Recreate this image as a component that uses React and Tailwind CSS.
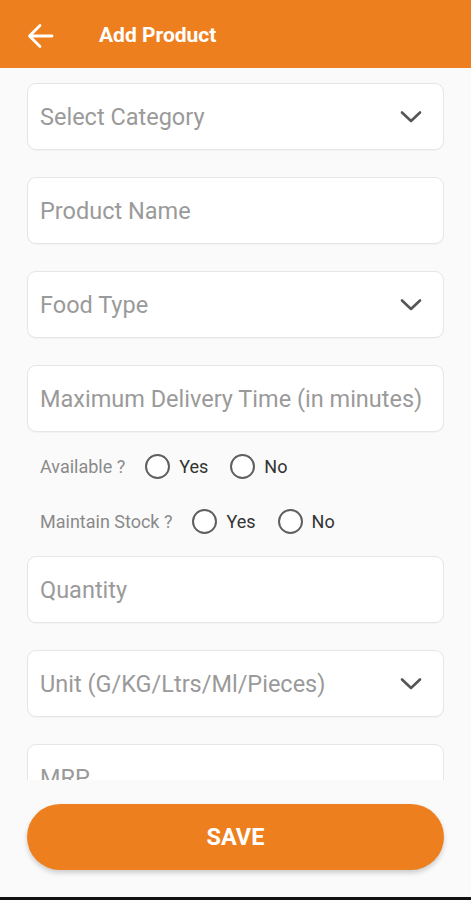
import React from "react";

const font = { fontFamily: "Roboto, 'Noto Sans', sans-serif" };

function Chevron() {
  return (
    <svg width="22" height="14" viewBox="0 0 22 14" className="shrink-0">
      <path d="M2 2.5 L11 11 L20 2.5" fill="none" stroke="#555" strokeWidth="2.6" strokeLinecap="round" strokeLinejoin="round" />
    </svg>
  );
}

function Field({ label, select }) {
  return (
    <div className="h-[67px] shrink-0 rounded-[9px] border border-[#e6e6e6] bg-white flex items-center pl-[12px] pr-[21px] justify-between shadow-[0_1px_1px_rgba(0,0,0,0.03)]">
      <span className="text-[23.5px] text-[#9a9a9a] whitespace-nowrap pt-[2px]">{label}</span>
      {select && <Chevron />}
    </div>
  );
}

function Radio({ label }) {
  return (
    <div className="flex items-center">
      <span className="w-[25px] h-[25px] rounded-full border-[2px] border-[#5f5f5f] bg-white" />
      <span className="ml-[9px] text-[18px] text-[#333]">{label}</span>
    </div>
  );
}

export default function App() {
  return (
    <div className="w-[471px] h-[900px] flex flex-col bg-[#fafafa] overflow-hidden" style={font}>
      <div className="h-[68px] shrink-0 bg-[#ee7f1f] flex items-center pl-[27px] pt-[3px]">
        <svg width="27" height="26" viewBox="0 0 27 26">
          <path d="M25 13 H3 M13 2.5 L2.5 13 L13 23.5" fill="none" stroke="#fff" strokeWidth="2.8" strokeLinecap="round" strokeLinejoin="round" />
        </svg>
        <span className="ml-[45px] text-white font-bold text-[21px]">Add Product</span>
      </div>
      <div className="h-[712px] shrink-0 overflow-hidden px-[27px] pt-[15px] flex flex-col">
        <Field label="Select Category" select />
        <div className="h-[27px] shrink-0" />
        <Field label="Product Name" />
        <div className="h-[27px] shrink-0" />
        <Field label="Food Type" select />
        <div className="h-[27px] shrink-0" />
        <Field label="Maximum Delivery Time (in minutes)" />
        <div className="h-[19px] shrink-0" />
        <div className="h-[30px] shrink-0 flex items-center pl-[13px]">
          <span className="text-[18px] text-[#8a8a8a] mr-[20px]">Available ?</span>
          <Radio label="Yes" />
          <div className="w-[22px]" />
          <Radio label="No" />
        </div>
        <div className="h-[25px] shrink-0" />
        <div className="h-[30px] shrink-0 flex items-center pl-[13px]">
          <span className="text-[18px] text-[#8a8a8a] mr-[20px]">Maintain Stock ?</span>
          <Radio label="Yes" />
          <div className="w-[22px]" />
          <Radio label="No" />
        </div>
        <div className="h-[20px] shrink-0" />
        <Field label="Quantity" />
        <div className="h-[27px] shrink-0" />
        <Field label="Unit (G/KG/Ltrs/Ml/Pieces)" select />
        <div className="h-[27px] shrink-0" />
        <Field label="MRP" />
      </div>
      <div className="flex-1 px-[27px] pt-[24px] relative">
        <button className="w-full h-[66px] rounded-full bg-[#ee7f1f] text-white font-bold text-[23.5px] pt-[2px] shadow-[0_3px_5px_rgba(0,0,0,0.18)]">
          SAVE
        </button>
        <div className="absolute left-0 right-0 bottom-0 h-[3px] bg-[#111]" />
      </div>
    </div>
  );
}
